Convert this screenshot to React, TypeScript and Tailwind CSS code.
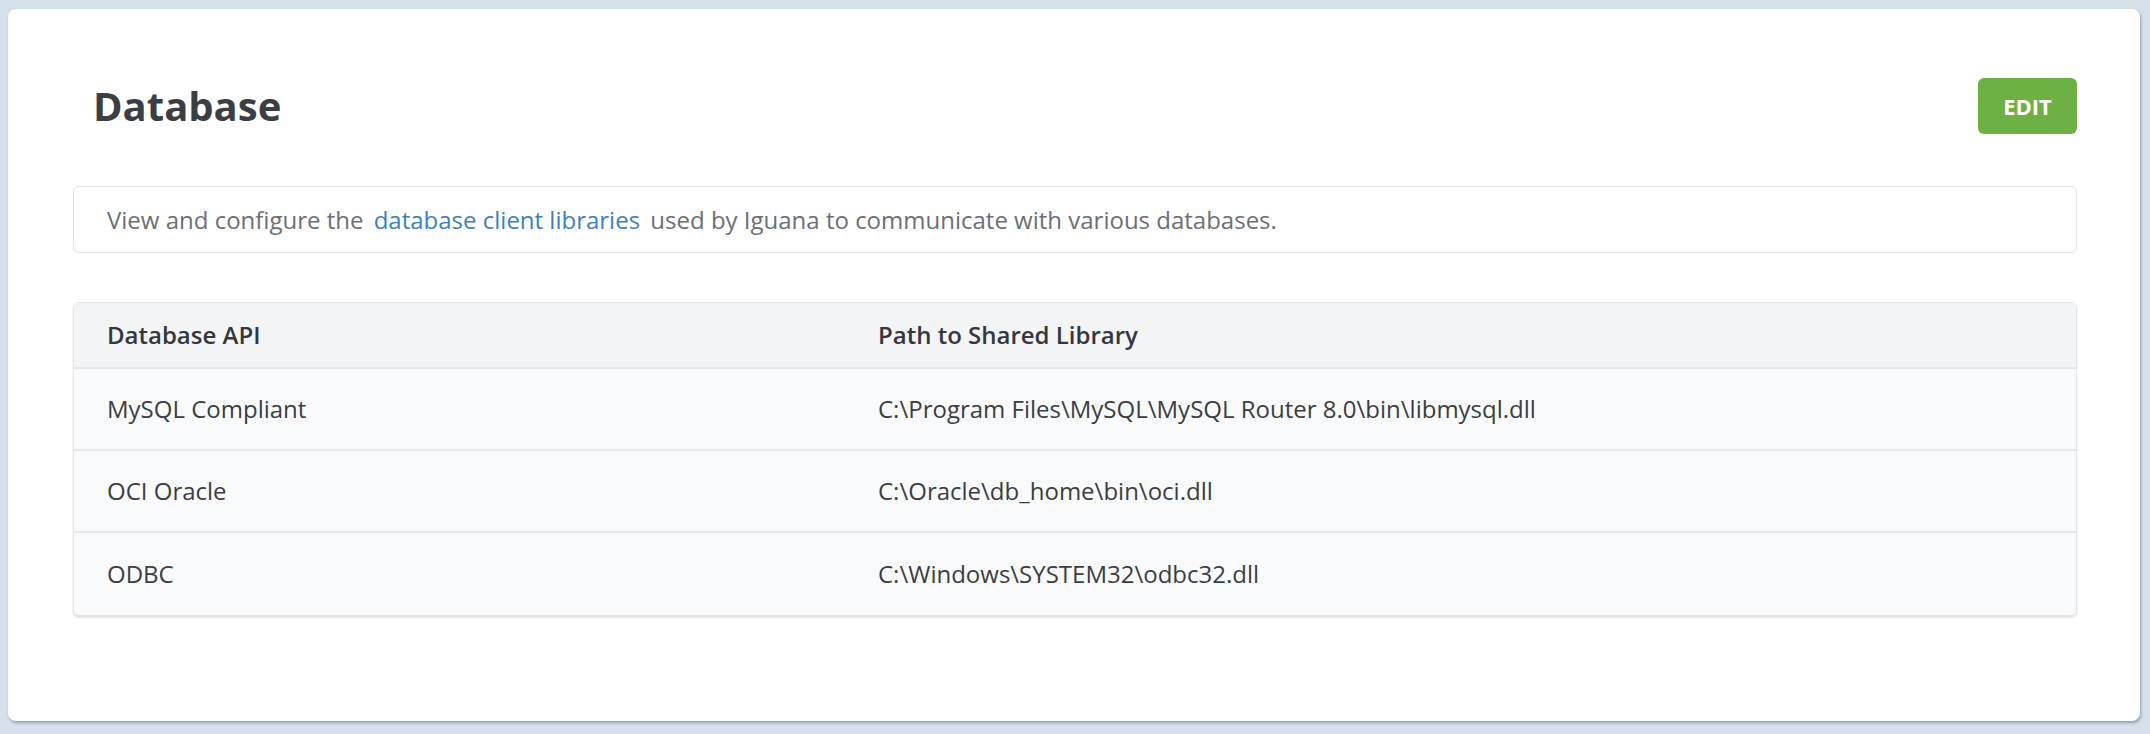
const ROWS = [
  { api: "MySQL Compliant", path: "C:\\Program Files\\MySQL\\MySQL Router 8.0\\bin\\libmysql.dll" },
  { api: "OCI Oracle", path: "C:\\Oracle\\db_home\\bin\\oci.dll" },
  { api: "ODBC", path: "C:\\Windows\\SYSTEM32\\odbc32.dll" },
];

export default function App() {
  return (
    <div
      className="min-h-[734px] bg-[#d6e0ea] pl-[8px] pr-[10px] pt-[9px] pb-[12px]"
      style={{ fontFamily: '"Open Sans", "Noto Sans", sans-serif' }}
    >
      <div className="rounded-[8px] bg-white pl-[65px] pr-[63px] pb-[105px] pt-[69px] shadow-[1px_2px_3px_rgba(60,80,100,0.45)]">
        {/* header */}
        <div className="flex h-[56px] items-center justify-between">
          <h1 className="pl-[20px] text-[40px] font-bold leading-none text-[#3b3f44]">Database</h1>
          <button
            type="button"
            className="flex h-[56px] w-[99px] items-center justify-center rounded-[6px] bg-[#6db145] text-[22px] font-bold text-white"
          >
            EDIT
          </button>
        </div>

        {/* description */}
        <div className="mt-[52px] flex h-[67px] items-center rounded-[6px] border border-[#e1e4e8] px-[33px] text-[24px] text-[#6b6f74]">
          <span>
            View and configure the{" "}
            <a href="#" className="mx-[4px] text-[#3c7fc2]">
              database client libraries
            </a>{" "}
            used by Iguana to communicate with various databases.
          </span>
        </div>

        {/* table */}
        <div className="mt-[49px] overflow-hidden rounded-[6px] border border-[#e1e4e8] shadow-[0_2px_2px_rgba(0,0,0,0.12)]">
          <div className="flex h-[66px] items-center border-b-2 border-[#e3e5e8] bg-[#f3f4f6] text-[24px] font-semibold text-[#34383d]">
            <div className="w-[771px] pl-[33px]">Database API</div>
            <div className="flex-1 pl-[33px]">Path to Shared Library</div>
          </div>
          {ROWS.map((row, i) => (
            <div
              key={row.api}
              className={`flex h-[82px] items-center bg-[#f9fafb] text-[24px] text-[#3a3e43] ${
                i < ROWS.length - 1 ? "border-b-2 border-[#e6e8eb]" : ""
              }`}
            >
              <div className="w-[771px] pl-[33px]">{row.api}</div>
              <div className="flex-1 pl-[33px]">{row.path}</div>
            </div>
          ))}
        </div>
      </div>
    </div>
  );
}
